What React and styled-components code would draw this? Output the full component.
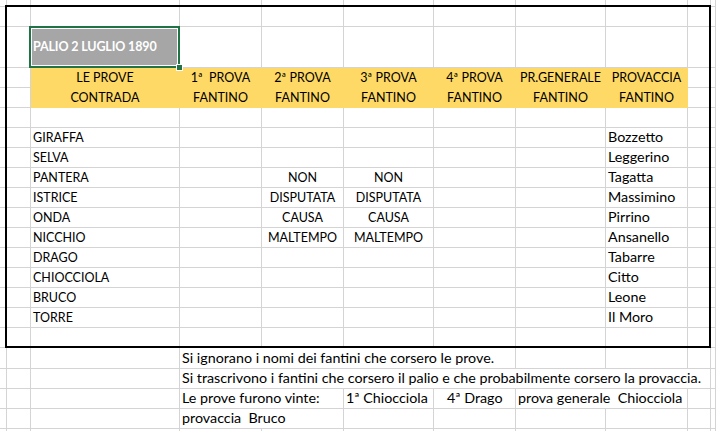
import React from "react";
import styled, { createGlobalStyle } from "styled-components";

const GlobalStyle = createGlobalStyle`
  html, body {
    margin: 0;
    padding: 0;
    background: #ffffff;
    overflow: hidden;
  }
  body {
    font-family: "Lato", "Open Sans", sans-serif;
  }
`;

const GRID = "#d4d4d4";
const YELLOW = "#ffd966";
const GRAY_FILL = "#a6a6a6";
const EXCEL_GREEN = "#217346";

const COL_WIDTHS = [7, 24, 149, 82, 82, 90, 82, 90, 82, 23, 5];
const ROW_HEIGHTS = [7, 20, 41, 20, 20, 20, 20, 20, 20, 20, 20, 20, 20, 20, 20, 20, 20, 21, 20, 20, 20, 3];

const Sheet = styled.div`
  display: grid;
  grid-template-columns: ${COL_WIDTHS.map((w) => `${w}px`).join(" ")};
  grid-template-rows: ${ROW_HEIGHTS.map((h) => `${h}px`).join(" ")};
  width: max-content;
  font-family: "Lato", "Open Sans", sans-serif;
  color: #000000;
`;

const Cell = styled.div`
  grid-row: ${(p) => p.$row};
  grid-column: ${(p) => p.$col} / span ${(p) => p.$span};
  box-sizing: border-box;
  min-width: 0;
  display: flex;
  align-items: center;
  justify-content: ${(p) => (p.$align === "center" ? "center" : "flex-start")};
  padding: ${(p) => (p.$caps ? "1px" : "0")} ${(p) => (p.$align === "center" ? "0" : "2px")} 0;
  background: ${(p) => p.$fill || "#ffffff"};
  border-right: 1px solid ${(p) => (p.$fill && p.$fill !== GRAY_FILL ? p.$fill : GRID)};
  border-bottom: 1px solid ${(p) => (p.$fill && p.$fill !== GRAY_FILL ? p.$fill : GRID)};
  white-space: pre;
  overflow: visible;
  font-size: ${(p) => (p.$caps ? "12.5px" : "14.3px")};
  letter-spacing: ${(p) => (p.$bold ? "-0.15px" : "0")};
  font-weight: ${(p) => (p.$bold ? 700 : 400)};
  color: ${(p) => p.$color || "#000000"};
  line-height: 1;
`;

const SheetBorder = styled.div`
  grid-row: 2 / 18;
  grid-column: 2 / 11;
  margin: -2px 0 0 -2px;
  border: 2px solid #000000;
  pointer-events: none;
  z-index: 2;
`;

const Selection = styled.div`
  grid-row: 3 / 4;
  grid-column: 3 / 4;
  margin: -1px 0 0 -2px;
  border: 2px solid ${EXCEL_GREEN};
  box-shadow: inset 0 0 0 1px #ffffff;
  position: relative;
  pointer-events: none;
  z-index: 3;
`;

const FillHandle = styled.div`
  position: absolute;
  right: -4px;
  bottom: -4px;
  width: 5px;
  height: 5px;
  background: ${EXCEL_GREEN};
  box-shadow: 0 0 0 1px #ffffff;
`;

const NCOLS = COL_WIDTHS.length;

const contrade = ["GIRAFFA", "SELVA", "PANTERA", "ISTRICE", "ONDA", "NICCHIO", "DRAGO", "CHIOCCIOLA", "BRUCO", "TORRE"];
const fantini = ["Bozzetto", "Leggerino", "Tagatta", "Massimino", "Pirrino", "Ansanello", "Tabarre", "Citto", "Leone", "Il Moro"];
const nonDisputata = { 2: "NON", 3: "DISPUTATA", 4: "CAUSA", 5: "MALTEMPO" };

const headerTop = ["LE PROVE", "1ª  PROVA", "2ª PROVA", "3ª PROVA", "4ª PROVA", "PR.GENERALE", "PROVACCIA"];
const headerBottom = ["CONTRADA", "FANTINO", "FANTINO", "FANTINO", "FANTINO", "FANTINO", "FANTINO"];

function buildRows() {
  const rows = [];
  const empty = () => ({});

  rows.push(empty()); // 0
  rows.push(empty()); // 1
  rows.push({ 2: { text: "PALIO 2 LUGLIO 1890", fill: GRAY_FILL, bold: true, color: "#ffffff" } }); // 2

  const h1 = {};
  headerTop.forEach((t, i) => (h1[2 + i] = { text: t, fill: YELLOW, align: "center" }));
  rows.push(h1); // 3
  const h2 = {};
  headerBottom.forEach((t, i) => (h2[2 + i] = { text: t, fill: YELLOW, align: "center" }));
  rows.push(h2); // 4

  rows.push(empty()); // 5

  contrade.forEach((c, i) => {
    const r = { 2: { text: c }, 8: { text: fantini[i] } };
    if (nonDisputata[i]) {
      r[4] = { text: nonDisputata[i], align: "center" };
      r[5] = { text: nonDisputata[i], align: "center" };
    }
    rows.push(r);
  }); // 6..15

  rows.push(empty()); // 16
  rows.push({ 3: { text: "Si ignorano i nomi dei fantini che corsero le prove.", span: 4 } }); // 17
  rows.push({
    3: { text: "Si trascrivono i fantini che corsero il palio e che probabilmente corsero la provaccia.", span: 7 },
  }); // 18
  rows.push({
    3: { text: "Le prove furono vinte:", span: 2 },
    5: { text: "1ª Chiocciola" },
    6: { text: "   4ª Drago" },
    7: { text: "prova generale  Chiocciola", span: 2 },
  }); // 19
  rows.push({ 3: { text: "provaccia  Bruco", span: 2 } }); // 20
  rows.push(empty()); // 21
  return rows;
}

const rows = buildRows();

const isCaps = (t) => !!t && t === t.toUpperCase() && /[A-Z]/.test(t);

export default function App() {
  const cells = [];
  rows.forEach((row, r) => {
    let c = 0;
    while (c < NCOLS) {
      const spec = row[c] || {};
      const span = spec.span || 1;
      cells.push(
        <Cell
          key={`${r}-${c}`}
          $row={r + 1}
          $col={c + 1}
          $span={span}
          $fill={spec.fill}
          $align={spec.align}
          $bold={spec.bold}
          $color={spec.color}
          $caps={isCaps(spec.text)}
        >
          {spec.text || ""}
        </Cell>
      );
      c += span;
    }
  });

  return (
    <>
      <GlobalStyle />
      <Sheet>
        {cells}
        <SheetBorder />
        <Selection>
          <FillHandle />
        </Selection>
      </Sheet>
    </>
  );
}
